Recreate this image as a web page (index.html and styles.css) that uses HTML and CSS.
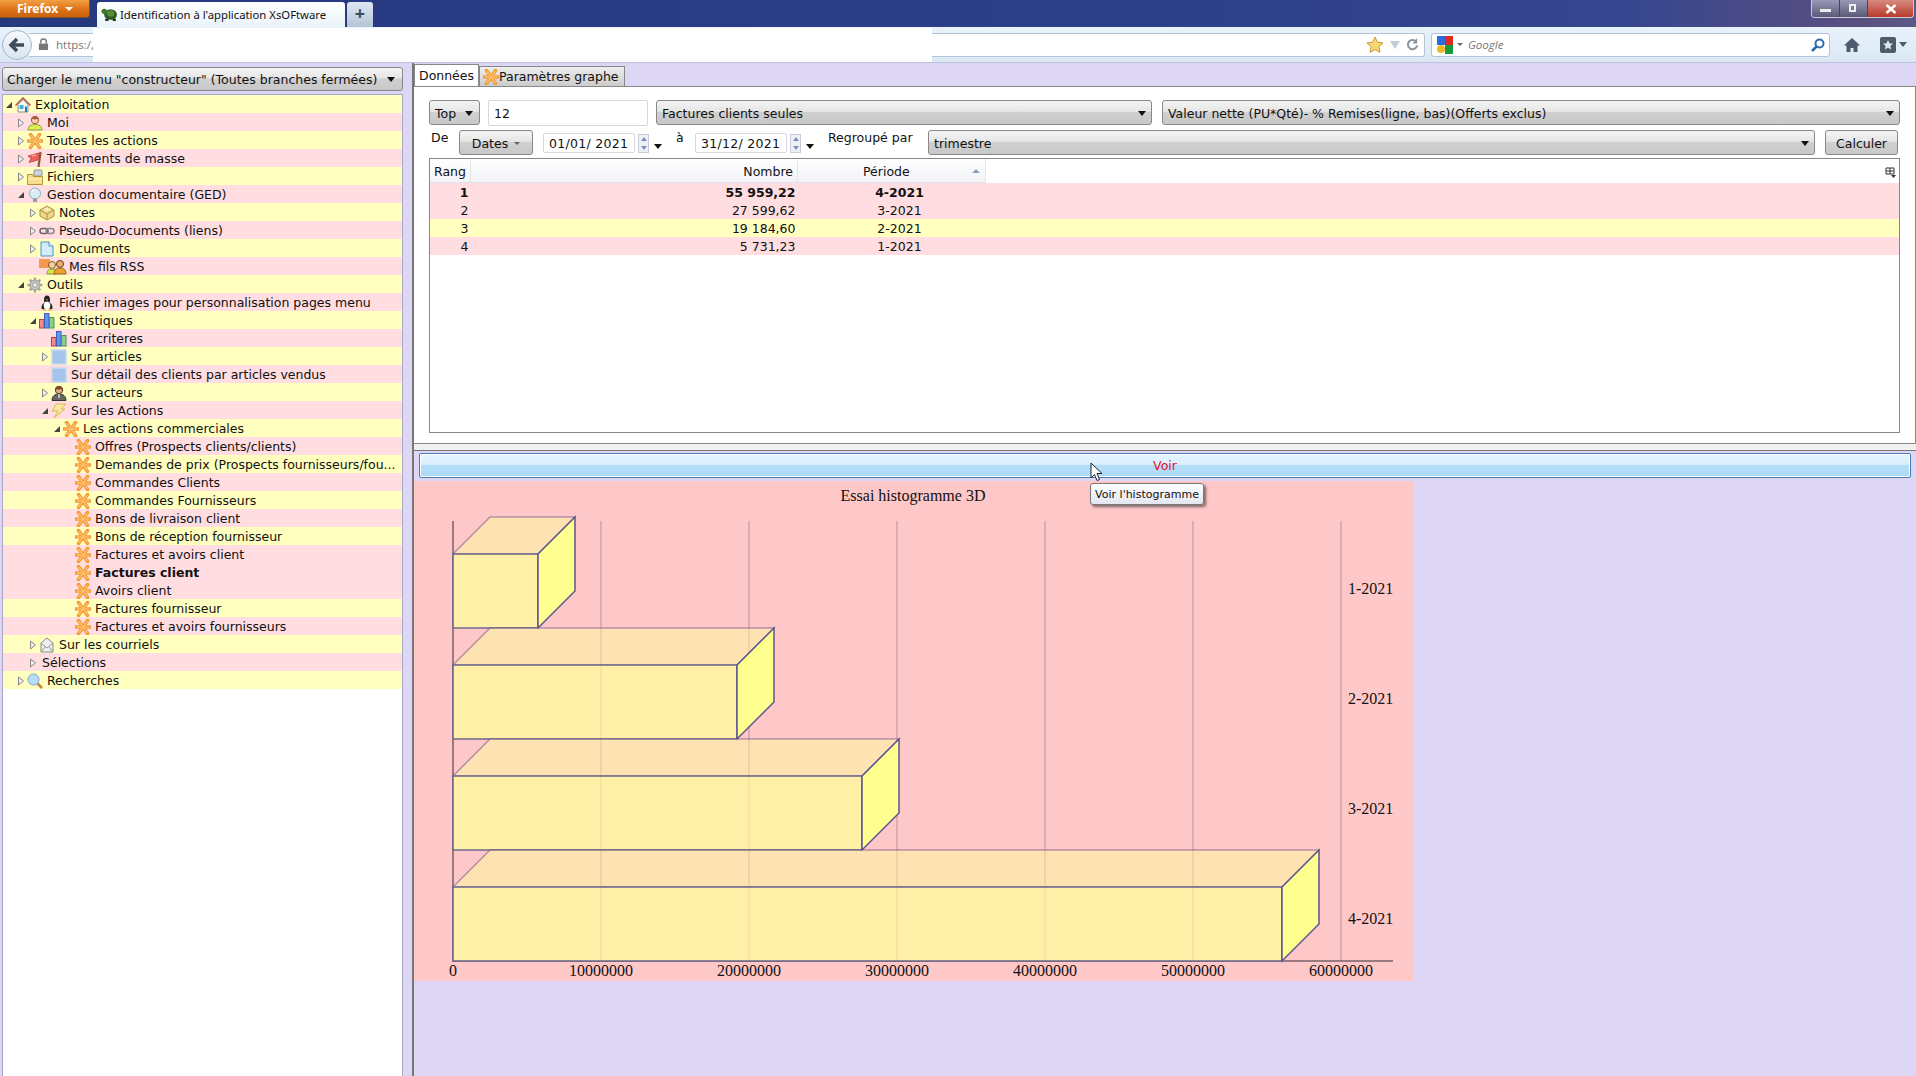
FILE: index.html
```html
<!DOCTYPE html>
<html lang="fr">
<head>
    <meta charset="UTF-8">
    <title>Identification à l'application XsOFtware</title>
    <link rel="stylesheet" href="styles.css">
</head>
<body>

<svg class="defs" width="0" height="0">
    <symbol id="i-star" viewBox="0 0 16 16">
        <path d="M1 8h14M3.500 1.500l9 13M12.500 1.500l-9 13" stroke="#f59b30" stroke-width="3.600" stroke-linecap="round" fill="none"/>
        <path d="M2 8h12M4 2.500l8 11M12 2.500l-8 11" stroke="#fbbd6c" stroke-width="1.500" stroke-linecap="round" fill="none"/>
    </symbol>
    <symbol id="i-home" viewBox="0 0 16 16">
        <path d="M3 7.500V15h10V7.500L8 2.500z" fill="#fbf6ea" stroke="#8a8a9a"/>
        <path d="M.5 8.500L8 1l7.500 7.500" fill="none" stroke="#b04a4a" stroke-width="1.400"/>
        <rect x="4.500" y="8" width="4" height="4" fill="#35b4e8"/>
        <rect x="10" y="9.500" width="2" height="5.500" fill="#2a7ab0"/>
    </symbol>
    <symbol id="i-user" viewBox="0 0 16 16">
        <circle cx="8" cy="5" r="3.700" fill="#f8d0b0" stroke="#a0603a"/>
        <path d="M4.500 4c0-3.500 7-3.500 7 0-2 .5-5 .5-7 0z" fill="#a8603a"/>
        <path d="M1 15c0-4 3-5.500 7-5.500s7 1.500 7 5.500z" fill="#dcec50" stroke="#8fa030"/>
    </symbol>
    <symbol id="i-flag" viewBox="0 0 16 16">
        <path d="M13.500 1l-2 15" stroke="#8a5a30" stroke-width="2.200"/>
        <path d="M1 5l11-3-1 7-9 2.500 2-4z" fill="#f0605c" stroke="#b83a3a" stroke-width=".7"/>
        <path d="M5 5l4-1" stroke="#ffc0b8"/>
    </symbol>
    <symbol id="i-folder" viewBox="0 0 16 16">
        <rect x="7" y="1" width="8" height="6" rx="1" fill="#cfd3da" stroke="#8a8f98"/>
        <path d="M.5 5.500h5l1 2h9v8H.5z" fill="#f8de8c" stroke="#b89238"/>
        <path d="M.5 10h15" stroke="#fff2c0"/>
    </symbol>
    <symbol id="i-bulb" viewBox="0 0 16 16">
        <circle cx="8" cy="6.500" r="5.500" fill="#d8ecf6" stroke="#8ab0c8"/>
        <path d="M5 4.500a3.500 3.500 0 0 1 3-2" fill="none" stroke="#fff" stroke-width="1.500"/>
        <rect x="6" y="11.500" width="4" height="3.500" fill="#9a9a9a"/>
    </symbol>
    <symbol id="i-note" viewBox="0 0 16 16">
        <path d="M8 1l7 4v6l-7 4-7-4V5z" fill="#f0d88a" stroke="#b0904a"/>
        <path d="M1 5l7 4 7-4M8 9v6" fill="none" stroke="#b0904a"/>
        <path d="M5 4.500l3-1.500 3 1.500-3 1.500z" fill="#fff6c8"/>
    </symbol>
    <symbol id="i-link" viewBox="0 0 16 16">
        <rect x="1" y="5.500" width="8" height="5" rx="2.500" fill="none" stroke="#666" stroke-width="1.500"/>
        <rect x="7" y="5.500" width="8" height="5" rx="2.500" fill="none" stroke="#888" stroke-width="1.500"/>
    </symbol>
    <symbol id="i-doc" viewBox="0 0 16 16">
        <path d="M2 1h8l4 4v10H2z" fill="#d4ecfa" stroke="#4a90c8"/>
        <path d="M10 1v4h4" fill="#fff" stroke="#4a90c8"/>
    </symbol>
    <symbol id="i-rss" viewBox="0 0 28 16">
        <rect x="0" y="0" width="11" height="9" fill="#f49a50"/>
        <circle cx="13" cy="6" r="3.500" fill="#f4cfa0" stroke="#7a5a20"/>
        <path d="M8 15c0-4 2-5 5-5s5 1 5 5z" fill="#d8e84a" stroke="#8a9a30"/>
        <circle cx="21" cy="5" r="3.500" fill="#e8b070" stroke="#6a3a10"/>
        <path d="M15 15c0-5 3-6 6-6s6 1 6 6z" fill="#f0a030" stroke="#9a6a20"/>
    </symbol>
    <symbol id="i-gear" viewBox="0 0 16 16">
        <path d="M8 .5v15M.5 8h15M2.700 2.700l10.600 10.600M13.300 2.700L2.700 13.300" stroke="#a8a8a8" stroke-width="2.400"/>
        <circle cx="8" cy="8" r="5" fill="#c8c8c8" stroke="#999"/>
        <circle cx="8" cy="8" r="2.300" fill="#f2f2f2" stroke="#999"/>
    </symbol>
    <symbol id="i-penguin" viewBox="0 0 16 16">
        <ellipse cx="8" cy="5" rx="3" ry="4.500" fill="#222"/>
        <path d="M2.500 14c0-5 2-7 5.500-7s5.500 2 5.500 7z" fill="#222"/>
        <ellipse cx="8" cy="10.500" rx="3.300" ry="4" fill="#fff"/>
        <path d="M7 4h2l-1 1.500z" fill="#f0b020"/>
        <path d="M3 15.500h4l-1-2.500zM9 15.500h4l-2-2.500z" fill="#f0b020"/>
    </symbol>
    <symbol id="i-bars" viewBox="0 0 16 16">
        <rect x=".5" y="6.500" width="4.500" height="8.500" fill="#f48a8a" stroke="#c83a3a"/>
        <rect x="5.500" y=".5" width="4.500" height="14.500" fill="#5a98e8" stroke="#3a60b8"/>
        <rect x="10.500" y="4.500" width="4.500" height="10.500" fill="#8ccc90" stroke="#4a9a4a"/>
    </symbol>
    <symbol id="i-square" viewBox="0 0 16 16">
        <rect x="1" y="1" width="14" height="14" fill="#a4c4ec" stroke="#c8d8ea" stroke-width="1.500"/>
    </symbol>
    <symbol id="i-man" viewBox="0 0 16 16">
        <path d="M1 15.500c0-4.500 3-6.500 7-6.500s7 2 7 6.500z" fill="#666" stroke="#333"/>
        <circle cx="8" cy="5" r="3.700" fill="#e0b088" stroke="#5a3a20"/>
        <path d="M4.300 4.500c0-4.500 7.400-4.500 7.400 0z" fill="#7a4a28"/>
        <path d="M8 9v4" stroke="#ddd" stroke-width="1.500"/>
    </symbol>
    <symbol id="i-bolt" viewBox="0 0 16 16">
        <path d="M5 1h10l-5 5h4L3 15l4-7H1z" fill="#f8e8a0" stroke="#e4b44c"/>
    </symbol>
    <symbol id="i-mail" viewBox="0 0 16 16">
        <path d="M2 6l6-5 6 5v9H2z" fill="#f0f0f0" stroke="#888"/>
        <path d="M2 6l6 5 6-5M2 15l4-5M14 15l-4-5" fill="none" stroke="#999"/>
    </symbol>
    <symbol id="i-loupe" viewBox="0 0 16 16">
        <path d="M10 10l5 5" stroke="#c08a40" stroke-width="2.500"/>
        <circle cx="6.500" cy="6.500" r="5.500" fill="#b8dcf8" stroke="#7aa8d0"/>
    </symbol>
    <symbol id="i-open" viewBox="0 0 8 8"><path d="M7 1v6H1z" fill="#444"/></symbol>
    <symbol id="i-closed" viewBox="0 0 8 10"><path d="M1.500 1l5 4-5 4z" fill="#eee" stroke="#888"/></symbol>
</svg>

<div class="titlebar">
    <div class="ff-btn">Firefox <span class="ff-caret"></span></div>
    <div class="tab-active">
        <svg class="favicon" viewBox="0 0 16 16"><ellipse cx="9" cy="8" rx="6" ry="5" fill="#2c5a20"/><ellipse cx="9" cy="7" rx="3.500" ry="3" fill="#5a8a3a"/><circle cx="3" cy="5" r="2.500" fill="#3c7a2c"/><path d="M4 13h3M11 13h3" stroke="#1a3a10" stroke-width="2"/></svg>
        <span>Identification à l'application XsOFtware</span>
    </div>
    <div class="tab-new">+</div>
    <div class="win-btns">
        <span class="win-min"><i></i></span>
        <span class="win-max"><i></i></span>
        <span class="win-close"><svg viewBox="0 0 12 10" width="12" height="10"><path d="M1.500 1l9 8M10.500 1l-9 8" stroke="#fff" stroke-width="2.400"/></svg></span>
    </div>
</div>

<div class="navbar">
    <div class="back-btn">
        <svg viewBox="0 0 20 20" width="20" height="20"><path d="M17 10H5M10 4l-6 6 6 6" fill="none" stroke="#3c4c5c" stroke-width="3.500"/></svg>
    </div>
    <div class="urlbar">
        <svg class="lock" viewBox="0 0 12 14" width="11" height="13"><path d="M3 6V4a3 3 0 0 1 6 0v2" fill="none" stroke="#777" stroke-width="1.500"/><rect x="1" y="6" width="10" height="7" fill="#777"/></svg>
        <span class="url">https:/,</span>
        <div class="url-tools">
            <svg viewBox="0 0 18 18" width="18" height="18"><path d="M9 1l2.400 5.300 5.600.6-4.200 3.800 1.200 5.700L9 13.500 4 16.400l1.200-5.700L1 6.900l5.600-.6z" fill="#fbd870" stroke="#c89838"/></svg>
            <svg viewBox="0 0 10 8" width="10" height="8"><path d="M0 0h10L5 8z" fill="#c4ccd4"/></svg>
            <svg viewBox="0 0 14 14" width="13" height="13"><path d="M11 4a5 5 0 1 0 1 4" fill="none" stroke="#8a949c" stroke-width="2.200"/><path d="M12 0v6H7z" fill="#8a949c"/></svg>
        </div>
    </div>
    <div class="searchbar">
        <svg viewBox="0 0 16 18" width="16" height="18"><rect x="0" y="0" width="8" height="9" fill="#2a6ae0"/><rect x="8" y="0" width="8" height="9" fill="#e02a20"/><rect x="8" y="9" width="8" height="9" fill="#1a9a3a"/><circle cx="4" cy="13" r="4" fill="#f0b820"/></svg>
        <span class="caret-sm"></span>
        <span class="google">Google</span>
        <svg class="search-ico" viewBox="0 0 14 14" width="14" height="14"><circle cx="8.500" cy="5.500" r="4" fill="none" stroke="#2a6ab0" stroke-width="2"/><path d="M5.500 8.500L1 13" stroke="#2a6ab0" stroke-width="2.500"/></svg>
    </div>
    <svg class="nav-home" viewBox="0 0 16 16" width="16" height="16"><path d="M8 1L0 8.500h2.500V15h4v-4h3v4h4V8.500H16z" fill="#4c5c6c"/></svg>
    <div class="nav-marks">
        <svg viewBox="0 0 16 16" width="16" height="16"><rect width="16" height="16" rx="2" fill="#4c5c6c"/><path d="M8 3l1.500 3.300 3.500.4-2.600 2.400.7 3.500L8 10.800l-3.100 1.800.7-3.500L3 6.700l3.500-.4z" fill="#dfe6ec"/></svg>
        <span class="caret-dark"></span>
    </div>
</div>
<div class="url-hidden"></div>

<div class="main">
    <div class="left-panel">
        <div class="btn menu-btn"><span>Charger le menu "constructeur" (Toutes branches fermées)</span><span class="caret"></span></div>
        <div class="tree">
            <div class="row y l0"><svg class="arrow"><use href="#i-open"/></svg><svg class="ico"><use href="#i-home"/></svg>Exploitation</div>
            <div class="row p l1"><svg class="arrow"><use href="#i-closed"/></svg><svg class="ico"><use href="#i-user"/></svg>Moi</div>
            <div class="row y l1"><svg class="arrow"><use href="#i-closed"/></svg><svg class="ico"><use href="#i-star"/></svg>Toutes les actions</div>
            <div class="row p l1"><svg class="arrow"><use href="#i-closed"/></svg><svg class="ico"><use href="#i-flag"/></svg>Traitements de masse</div>
            <div class="row y l1"><svg class="arrow"><use href="#i-closed"/></svg><svg class="ico"><use href="#i-folder"/></svg>Fichiers</div>
            <div class="row p l1"><svg class="arrow"><use href="#i-open"/></svg><svg class="ico"><use href="#i-bulb"/></svg>Gestion documentaire (GED)</div>
            <div class="row y l2"><svg class="arrow"><use href="#i-closed"/></svg><svg class="ico"><use href="#i-note"/></svg>Notes</div>
            <div class="row p l2"><svg class="arrow"><use href="#i-closed"/></svg><svg class="ico"><use href="#i-link"/></svg>Pseudo-Documents (liens)</div>
            <div class="row y l2"><svg class="arrow"><use href="#i-closed"/></svg><svg class="ico"><use href="#i-doc"/></svg>Documents</div>
            <div class="row p l2"><span class="arrow"></span><svg class="ico-wide"><use href="#i-rss"/></svg>Mes fils RSS</div>
            <div class="row y l1"><svg class="arrow"><use href="#i-open"/></svg><svg class="ico"><use href="#i-gear"/></svg>Outils</div>
            <div class="row p l2"><span class="arrow"></span><svg class="ico"><use href="#i-penguin"/></svg>Fichier images pour personnalisation pages menu</div>
            <div class="row y l2"><svg class="arrow"><use href="#i-open"/></svg><svg class="ico"><use href="#i-bars"/></svg>Statistiques</div>
            <div class="row p l3"><span class="arrow"></span><svg class="ico"><use href="#i-bars"/></svg>Sur criteres</div>
            <div class="row y l3"><svg class="arrow"><use href="#i-closed"/></svg><svg class="ico"><use href="#i-square"/></svg>Sur articles</div>
            <div class="row p l3"><span class="arrow"></span><svg class="ico"><use href="#i-square"/></svg>Sur détail des clients par articles vendus</div>
            <div class="row y l3"><svg class="arrow"><use href="#i-closed"/></svg><svg class="ico"><use href="#i-man"/></svg>Sur acteurs</div>
            <div class="row p l3"><svg class="arrow"><use href="#i-open"/></svg><svg class="ico"><use href="#i-bolt"/></svg>Sur les Actions</div>
            <div class="row y l4"><svg class="arrow"><use href="#i-open"/></svg><svg class="ico"><use href="#i-star"/></svg>Les actions commerciales</div>
            <div class="row p l5"><span class="arrow"></span><svg class="ico"><use href="#i-star"/></svg>Offres (Prospects clients/clients)</div>
            <div class="row y l5"><span class="arrow"></span><svg class="ico"><use href="#i-star"/></svg>Demandes de prix (Prospects fournisseurs/fou...</div>
            <div class="row p l5"><span class="arrow"></span><svg class="ico"><use href="#i-star"/></svg>Commandes Clients</div>
            <div class="row y l5"><span class="arrow"></span><svg class="ico"><use href="#i-star"/></svg>Commandes Fournisseurs</div>
            <div class="row p l5"><span class="arrow"></span><svg class="ico"><use href="#i-star"/></svg>Bons de livraison client</div>
            <div class="row y l5"><span class="arrow"></span><svg class="ico"><use href="#i-star"/></svg>Bons de réception fournisseur</div>
            <div class="row p l5"><span class="arrow"></span><svg class="ico"><use href="#i-star"/></svg>Factures et avoirs client</div>
            <div class="row p l5 bold"><span class="arrow"></span><svg class="ico"><use href="#i-star"/></svg>Factures client</div>
            <div class="row p l5"><span class="arrow"></span><svg class="ico"><use href="#i-star"/></svg>Avoirs client</div>
            <div class="row y l5"><span class="arrow"></span><svg class="ico"><use href="#i-star"/></svg>Factures fournisseur</div>
            <div class="row p l5"><span class="arrow"></span><svg class="ico"><use href="#i-star"/></svg>Factures et avoirs fournisseurs</div>
            <div class="row y l2"><svg class="arrow"><use href="#i-closed"/></svg><svg class="ico"><use href="#i-mail"/></svg>Sur les courriels</div>
            <div class="row p l2 no-ico"><svg class="arrow"><use href="#i-closed"/></svg>Sélections</div>
            <div class="row y l1"><svg class="arrow"><use href="#i-closed"/></svg><svg class="ico"><use href="#i-loupe"/></svg>Recherches</div>
        </div>
    </div>

    <div class="right-panel">
        <div class="tabs">
            <div class="tab on">Données</div>
            <div class="tab off"><svg class="ico-tab"><use href="#i-star"/></svg>Paramètres graphe</div>
        </div>
        <div class="content">
            <div class="form-row row-one">
                <div class="btn top-btn">Top <span class="caret"></span></div>
                <div class="input top-input">12</div>
                <div class="btn sel sel-kind"><span>Factures clients seules</span><span class="caret"></span></div>
                <div class="btn sel sel-value"><span>Valeur nette (PU*Qté)- % Remises(ligne, bas)(Offerts exclus)</span><span class="caret"></span></div>
            </div>
            <div class="form-row row-two">
                <span class="lbl lbl-de">De</span>
                <div class="btn dates-btn">Dates <span class="caret-sm"></span></div>
                <div class="input date">01/01/ 2021</div>
                <div class="spin"><i class="up"></i><i class="down"></i></div>
                <span class="caret date-caret"></span>
                <span class="lbl lbl-a">à</span>
                <div class="input date">31/12/ 2021</div>
                <div class="spin"><i class="up"></i><i class="down"></i></div>
                <span class="caret date-caret"></span>
                <span class="lbl lbl-group">Regroupé par</span>
                <div class="btn sel sel-group"><span>trimestre</span><span class="caret"></span></div>
                <div class="btn calc-btn">Calculer</div>
            </div>
            <div class="grid-box">
                <table class="grid">
                    <thead>
                        <tr>
                            <th class="c-rang">Rang</th>
                            <th class="c-nombre">Nombre</th>
                            <th class="c-periode">Période<span class="sort-up"></span></th>
                            <th class="c-rest"><svg class="col-ico" viewBox="0 0 11 11" width="11" height="11"><path d="M1 1h8v6H1zM1 4h8M5 1v6" fill="none" stroke="#333"/><path d="M6 8h5l-2.500 3z" fill="#333"/></svg></th>
                        </tr>
                    </thead>
                    <tbody>
                        <tr class="p bold"><td class="r">1</td><td class="r">55 959,22</td><td class="m">4-2021</td><td></td></tr>
                        <tr class="p"><td class="r">2</td><td class="r">27 599,62</td><td class="m">3-2021</td><td></td></tr>
                        <tr class="y"><td class="r">3</td><td class="r">19 184,60</td><td class="m">2-2021</td><td></td></tr>
                        <tr class="p"><td class="r">4</td><td class="r">5 731,23</td><td class="m">1-2021</td><td></td></tr>
                    </tbody>
                </table>
            </div>
        </div>
        <div class="splitter"></div>
        <div class="voir-btn">Voir</div>
        <svg class="chart" viewBox="414 481 999 500" width="999" height="500">
            <text class="chart-title" x="913" y="501">Essai histogramme 3D</text>
            <g class="gridlines">
                <path d="M601 521V961M749 521V961M897 521V961M1045 521V961M1193 521V961M1341 521V961"/>
            </g>
            <path class="axis" d="M453 521V961H1393"/>
            <g class="bar">
                <path class="top" d="M453 554L490 517H575L538 554Z"/>
                <path class="front" d="M453 554H538V628H453Z"/>
                <path class="side" d="M538 554L575 517V591L538 628Z"/>
            </g>
            <g class="bar">
                <path class="top" d="M453 665L490 628H774L737 665Z"/>
                <path class="front" d="M453 665H737V739H453Z"/>
                <path class="side" d="M737 665L774 628V702L737 739Z"/>
            </g>
            <g class="bar">
                <path class="top" d="M453 776L490 739H899L862 776Z"/>
                <path class="front" d="M453 776H862V850H453Z"/>
                <path class="side" d="M862 776L899 739V813L862 850Z"/>
            </g>
            <g class="bar">
                <path class="top" d="M453 887L490 850H1319L1282 887Z"/>
                <path class="front" d="M453 887H1282V961H453Z"/>
                <path class="side" d="M1282 887L1319 850V924L1282 961Z"/>
            </g>
            <g class="cat-labels">
                <text x="1348" y="594">1-2021</text>
                <text x="1348" y="704">2-2021</text>
                <text x="1348" y="814">3-2021</text>
                <text x="1348" y="924">4-2021</text>
            </g>
            <g class="val-labels">
                <text x="453" y="976">0</text>
                <text x="601" y="976">10000000</text>
                <text x="749" y="976">20000000</text>
                <text x="897" y="976">30000000</text>
                <text x="1045" y="976">40000000</text>
                <text x="1193" y="976">50000000</text>
                <text x="1341" y="976">60000000</text>
            </g>
        </svg>
    </div>
</div>

<div class="tooltip">Voir l'histogramme</div>
<svg class="cursor" viewBox="0 0 13 20" width="13" height="20"><path d="M1 1v15l3.500-3.500 2.500 6 2.500-1-2.500-6H12z" fill="#fff" stroke="#223" stroke-width="1"/></svg>

</body>
</html>
```

FILE: styles.css
```css
html, body {
    margin: 0;
    padding: 0;
    height: 100%;
    overflow: hidden;
}
body {
    font-family: "DejaVu Sans", sans-serif;
    font-size: 12.5px;
    color: #111;
    background-color: #ddd6f5;
    display: flex;
    flex-direction: column;
    position: relative;
}
.defs {
    position: absolute;
}

/* browser chrome */
.titlebar {
    height: 27px;
    flex: none;
    display: flex;
    align-items: flex-start;
    background: linear-gradient(to right, #26397f, #2c3f88 60%, #36468f 85%, #5a5080 97%, #5a5a88);
    font-family: "Noto Sans", sans-serif;
    position: relative;
}
.ff-btn {
    width: 90px;
    height: 18px;
    box-sizing: border-box;
    padding-left: 17px;
    line-height: 17px;
    color: #fff;
    font-weight: bold;
    font-size: 12px;
    border-radius: 0 0 4px 0;
    background: linear-gradient(#f2a044, #e0761a 50%, #c8620e);
    border: 1px solid #8a5020;
    border-top: none;
    border-left: none;
}
.ff-caret {
    display: inline-block;
    margin-left: 4px;
    border: 4px solid transparent;
    border-top-color: #fff;
    border-bottom: none;
    vertical-align: 2px;
}
.tab-active {
    width: 248px;
    height: 25px;
    margin: 2px 0 0 7px;
    padding-left: 4px;
    box-sizing: border-box;
    display: flex;
    align-items: center;
    gap: 2px;
    background: linear-gradient(#ffffff, #eaf3fb);
    border-radius: 3px 3px 0 0;
    font-size: 11.3px;
    white-space: nowrap;
}
.favicon {
    width: 17px;
    height: 17px;
    flex: none;
}
.tab-new {
    width: 26px;
    height: 25px;
    margin: 2px 0 0 2px;
    text-align: center;
    line-height: 23px;
    font-size: 18px;
    font-weight: bold;
    color: #3c4a58;
    background: linear-gradient(#dfe8f2, #b4c4d6);
    border-radius: 3px 3px 0 0;
}
.win-btns {
    position: absolute;
    right: 2px;
    top: 0;
    height: 17px;
    display: flex;
    border: 1px solid #ccd;
    border-top: none;
    border-radius: 0 0 4px 4px;
    overflow: hidden;
}
.win-btns span {
    display: flex;
    height: 17px;
    align-items: center;
    justify-content: center;
}
.win-min, .win-max {
    width: 27px;
    background: linear-gradient(#9a9ab8, #5a5a78);
    border-right: 1px solid #445;
    position: relative;
}
.win-min i {
    position: absolute;
    left: 8px;
    top: 9px;
    width: 11px;
    height: 3px;
    background: #eee;
}
.win-max i {
    position: absolute;
    left: 9px;
    top: 4px;
    width: 7px;
    height: 8px;
    border: 2px solid #eee;
    box-sizing: border-box;
}
.win-close {
    width: 45px;
    background: linear-gradient(#d88a80, #b83a2a);
}

.navbar {
    height: 36px;
    flex: none;
    display: flex;
    align-items: center;
    box-sizing: border-box;
    background: linear-gradient(#e8f2fb, #dbe8f4);
    border-bottom: 1px solid #b8c4da;
    position: relative;
}
.back-btn {
    width: 30px;
    height: 30px;
    margin: 0 -3px 0 2px;
    flex: none;
    border-radius: 50%;
    background: linear-gradient(#f6fafd, #d8e4f0);
    border: 1px solid #a4b4c8;
    display: flex;
    align-items: center;
    justify-content: center;
    box-sizing: border-box;
    position: relative;
}
.urlbar {
    width: 1396px;
    height: 24px;
    flex: none;
    box-sizing: border-box;
    padding-left: 9px;
    display: flex;
    align-items: center;
    gap: 7px;
    background: #fff;
    border: 1px solid #b4c4d8;
    border-left: none;
    border-radius: 0 3px 3px 0;
    font-family: "Open Sans", sans-serif;
    font-size: 11.5px;
    color: #777;
}
.url-tools {
    margin-left: auto;
    margin-right: 5px;
    display: flex;
    align-items: center;
    gap: 6px;
}
.searchbar {
    width: 399px;
    height: 24px;
    margin-left: 6px;
    flex: none;
    box-sizing: border-box;
    padding: 0 7px 0 5px;
    display: flex;
    align-items: center;
    gap: 4px;
    background: #fff;
    border: 1px solid #b4c4d8;
    border-radius: 3px;
}
.google {
    margin-left: 1px;
    font-family: "Open Sans", sans-serif;
    font-style: italic;
    font-size: 11.5px;
    color: #777;
}
.search-ico {
    margin-left: auto;
    margin-right: -3px;
}
.nav-home {
    margin-left: 14px;
}
.nav-marks {
    margin-left: 20px;
    display: flex;
    align-items: center;
    gap: 3px;
}
.caret-dark {
    border: 4px solid transparent;
    border-top: 5px solid #4c5c6c;
    border-bottom: none;
}
.url-hidden {
    position: absolute;
    left: 93px;
    top: 28px;
    width: 839px;
    height: 34px;
    background: #fff;
}

/* layout */
.main {
    flex: 1;
    min-height: 0;
    display: flex;
}
.left-panel {
    width: 412px;
    flex: none;
    box-sizing: border-box;
    padding: 4px 9px 0 2px;
    display: flex;
    flex-direction: column;
}
.right-panel {
    flex: 1;
    min-width: 0;
    border-left: 2px solid #777;
    display: flex;
    flex-direction: column;
    position: relative;
}

/* generic controls */
.btn {
    height: 25px;
    box-sizing: border-box;
    padding-top: 1px;
    display: flex;
    align-items: center;
    border: 1px solid #888;
    border-radius: 3px;
    background: linear-gradient(#f4f4f4, #e6e6e6 45%, #d0d0d0 50%, #c8c8c8);
    white-space: nowrap;
}
.sel {
    justify-content: space-between;
    padding: 1px 5px 0;
}
.caret {
    display: inline-block;
    border: 4px solid transparent;
    border-top: 5px solid #111;
    border-bottom: none;
    flex: none;
}
.caret-sm {
    display: inline-block;
    border: 3px solid transparent;
    border-top: 3px solid #666;
    border-bottom: none;
    flex: none;
}
.input {
    box-sizing: border-box;
    background: #fff;
    border: 1px solid #d4d8e0;
    border-radius: 2px;
    display: flex;
    align-items: center;
    padding: 0 5px;
    white-space: nowrap;
}

/* tree */
.menu-btn {
    height: 24px;
    justify-content: space-between;
    padding: 1px 7px 0 4px;
    flex: none;
}
.tree {
    margin-top: 3px;
    flex: 1;
    background: #fff;
    border: 1px solid #a8a8c4;
    border-bottom: none;
}
.row {
    height: 18px;
    box-sizing: border-box;
    padding-top: 1px;
    display: flex;
    align-items: center;
    white-space: nowrap;
    overflow: hidden;
}
.y {
    background-color: #ffffc0;
}
.p {
    background-color: #ffdde0;
}
.bold {
    font-weight: bold;
}
.arrow {
    width: 8px;
    height: 10px;
    flex: none;
    margin-right: 2px;
}
.ico {
    width: 16px;
    height: 16px;
    flex: none;
    margin-right: 4px;
}
.ico-wide {
    width: 28px;
    height: 16px;
    flex: none;
    margin-right: 2px;
}
.l0 { padding-left: 2px; }
.l1 { padding-left: 14px; }
.l2 { padding-left: 26px; }
.l3 { padding-left: 38px; }
.l4 { padding-left: 50px; }
.l5 { padding-left: 62px; }
.no-ico .arrow {
    margin-right: 5px;
}

/* tabs */
.tabs {
    height: 23px;
    flex: none;
    display: flex;
    align-items: flex-end;
}
.tab {
    box-sizing: border-box;
    border: 1px solid #888;
    border-bottom: none;
    display: flex;
    align-items: center;
    white-space: nowrap;
}
.tab.on {
    width: 65px;
    height: 22px;
    padding-left: 4px;
    background: #fff;
}
.tab.off {
    width: 146px;
    height: 20px;
    background: linear-gradient(#eee, #ccc);
    margin-left: 0;
}
.ico-tab {
    width: 16px;
    height: 16px;
    flex: none;
    margin-left: 3px;
}

/* top panel */
.content {
    height: 358px;
    flex: none;
    box-sizing: border-box;
    padding: 13px 15px 0 15px;
    background: #fff;
    border-top: 1px solid #888;
    border-bottom: 1px solid #888;
    border-right: 1px solid #888;
}
.form-row {
    display: flex;
    align-items: flex-start;
}
.top-btn {
    width: 51px;
    padding: 1px 6px 0 5px;
    justify-content: space-between;
}
.top-input {
    width: 160px;
    height: 26px;
    margin-left: 8px;
}
.sel-kind {
    width: 496px;
    margin-left: 8px;
}
.sel-value {
    flex: 1;
    margin-left: 10px;
}
.row-two {
    margin-top: 4px;
    height: 29px;
}
.lbl {
    white-space: nowrap;
    line-height: 16px;
}
.lbl-de {
    width: 30px;
    margin-left: 2px;
    margin-right: -2px;
}
.dates-btn {
    width: 74px;
    justify-content: center;
    gap: 6px;
}
.date {
    width: 92px;
    height: 20px;
    margin-top: 3px;
    margin-left: 10px;
    letter-spacing: 0.3px;
}
.spin {
    width: 11px;
    height: 19px;
    margin: 4px 0 0 3px;
    box-sizing: border-box;
    border: 1px solid #c8ccd8;
    display: flex;
    flex-direction: column;
    align-items: center;
    justify-content: space-around;
    background: #eef0f6;
}
.spin i {
    border: 3px solid transparent;
}
.spin .up {
    border-bottom: 4px solid #7c90c4;
    border-top: none;
}
.spin .down {
    border-top: 4px solid #7c90c4;
    border-bottom: none;
}
.date-caret {
    margin: 14px 0 0 5px;
}
.lbl-a {
    width: 13px;
    margin-left: 14px;
}
.lbl-a + .date {
    margin-left: 6px;
}
.lbl-group {
    margin-left: 14px;
    width: 100px;
}
.sel-group {
    flex: 1;
}
.calc-btn {
    width: 73px;
    margin: 0 2px 0 10px;
    justify-content: center;
}

.grid-box {
    height: 275px;
    box-sizing: border-box;
    border: 1px solid #888;
    margin-top: -1px;
}
.grid {
    width: 100%;
    border-collapse: collapse;
    table-layout: fixed;
}
.grid th {
    height: 22px;
    padding: 1px 4px 0;
    font-weight: normal;
    background: linear-gradient(#ffffff, #f0f2f6);
    border-right: 1px solid #e4e6ec;
    border-bottom: 1px solid #e0e2e8;
    position: relative;
}
.grid td {
    height: 18px;
    padding: 0 2px;
}
.c-rang {
    width: 32px;
    text-align: left;
}
.c-nombre {
    width: 318px;
    text-align: right;
}
.c-periode {
    width: 179px;
    text-align: left;
    text-indent: 61px;
}
.grid .c-rest {
    background: #fff;
    border: none;
    text-align: right;
}
.col-ico {
    vertical-align: middle;
    margin-right: -1px;
}
.sort-up {
    position: absolute;
    right: 5px;
    top: 10px;
    border: 4px solid transparent;
    border-bottom: 4px solid #8aa0c0;
    border-top: none;
}
.r {
    text-align: right;
}
.grid .m {
    text-align: center;
    padding: 0 0 0 16px;
}

/* voir */
.splitter {
    height: 6px;
    flex: none;
    background: #f0f0f0;
    border-bottom: 1px solid #777;
}
.voir-btn {
    height: 25px;
    flex: none;
    box-sizing: border-box;
    margin: 2px 5px 0 5px;
    text-align: center;
    line-height: 23px;
    color: #e8102a;
    border: 1px solid #4a7ab5;
    border-radius: 2px;
    box-shadow: inset 0 0 0 1px #fff;
    background: linear-gradient(#e6f6fe, #d8effc 45%, #b4def8 50%, #acdaf6);
}
.chart {
    display: block;
    flex: none;
    margin-top: 3px;
    background: #ffc8c8;
}
.chart text {
    font-family: "Liberation Serif", serif;
    font-size: 16px;
    fill: #111;
}
.chart .chart-title {
    text-anchor: middle;
}
.val-labels text {
    text-anchor: middle;
}
.gridlines path {
    stroke: rgba(60, 30, 60, 0.22);
    stroke-width: 1.5;
    fill: none;
}
.axis {
    stroke: #7a6068;
    stroke-width: 1.5;
    fill: none;
}
.bar path {
    stroke-width: 1.5;
    stroke: #5c5490;
}
.bar .top {
    fill: rgba(255, 255, 153, 0.48);
    stroke: rgba(92, 60, 130, 0.45);
}
.bar .front {
    fill: rgba(255, 255, 153, 0.7);
    stroke: #706890;
}
.bar .side {
    fill: #ffff90;
}

/* overlay */
.tooltip {
    position: absolute;
    left: 1090px;
    top: 483px;
    width: 114px;
    height: 22px;
    box-sizing: border-box;
    line-height: 21px;
    text-align: center;
    font-size: 11px;
    background: linear-gradient(#fff, #e4e6f0);
    border: 1px solid #777;
    border-radius: 3px;
    box-shadow: 2px 2px 3px rgba(0, 0, 0, 0.5);
}
.cursor {
    position: absolute;
    left: 1090px;
    top: 462px;
}
```
